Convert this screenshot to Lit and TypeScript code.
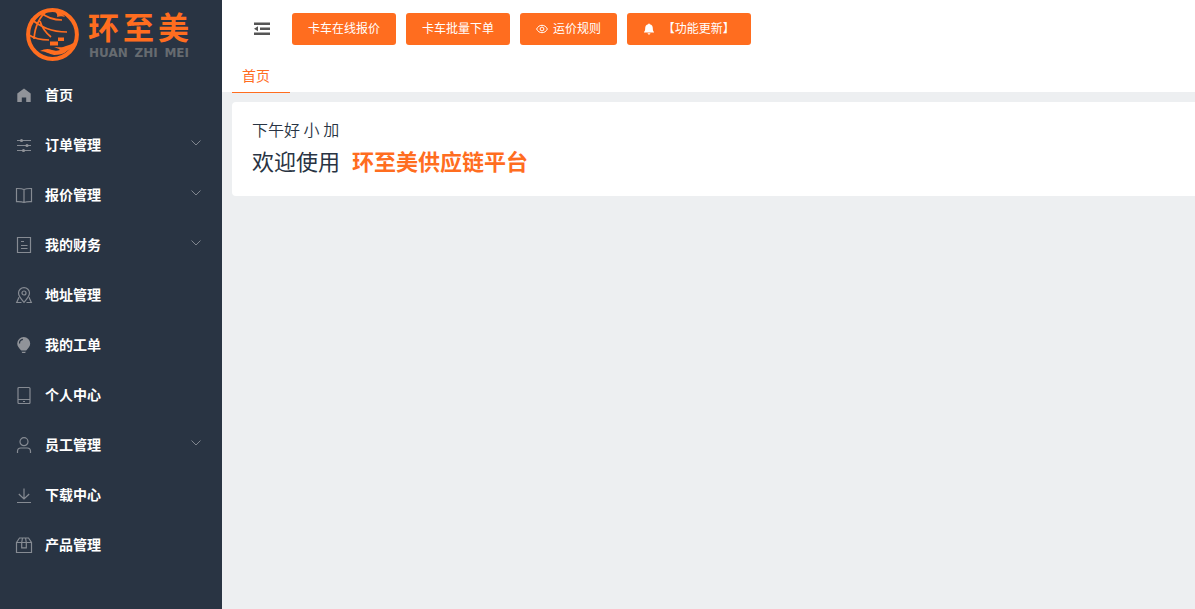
import { LitElement, html, css, svg, nothing } from "lit";
import { customElement, property, state } from "lit/decorators.js";
import { classMap } from "lit/directives/class-map.js";

const icons: Record<string, unknown> = {
  home: svg`<path class="solid" d="M9 2.4 2.3 7.6V16h4.5v-4.6h4.4V16h4.5V7.6z"/>`,
  operation: svg`<path d="M2 4.500h14M2 9.500h14M2 14.500h14"/><circle class="solid" cx="6.500" cy="4.500" r="1.600"/><circle class="solid" cx="12" cy="9.500" r="1.600"/><circle class="solid" cx="8.500" cy="14.500" r="1.600"/>`,
  book: svg`<path d="M9 3.500C6.500 2.300 4 2.500 1.500 2.500v13.200c2.500 0 5-.2 7.500.8 2.500-1 5-.8 7.500-.8V2.500c-2.500 0-5-.2-7.500 1zM9 3.500v13"/>`,
  document: svg`<path d="M2.500 1.500h13v15h-13zM6 5.500h3M6 9.500h6.500M6 12.500h6.500"/>`,
  location: svg`<path d="M9 16.300c-2.800-3-5.500-6-5.500-9.200a5.500 5.500 0 0 1 11 0c0 3.200-2.700 6.200-5.500 9.200z"/><circle cx="9" cy="7" r="2"/><path d="M4 11.300 1.700 16.500h4.800M14 11.300l2.300 5.200h-4.800"/>`,
  bulb: svg`<path class="solid" d="M8.700 1a6.500 6.500 0 0 0-6.500 6.500c0 2.900 2 4.500 3.300 6.300.3.500.5.800.9.800H11c.4 0 .6-.3.900-.8 1.300-1.800 3.300-3.400 3.300-6.300A6.500 6.500 0 0 0 8.700 1zM6.500 15.800h4.400l-.8 1.200H7.300z"/><path class="shade" d="M4.500 7.400c0-2.300 1.400-3.700 3.400-4"/>`,
  mobile: svg`<rect x="3" y="1.500" width="12" height="16" rx="1"/><path d="M3 13.500h12M8 15.500h2"/>`,
  user: svg`<circle cx="9" cy="5.700" r="4"/><path d="M2.500 17v-1.800c0-2 1.300-3.200 3.300-3.200h6.400c2 0 3.300 1.200 3.300 3.200V17"/>`,
  download: svg`<path d="M9 2.500v10.300M3.800 8 9 13l5.200-5M2 16.500h14"/>`,
  box: svg`<path d="M1.500 6.500 4.500 2h9l3 4.500v10h-15zM1.500 6.500h15M7.500 2 6.700 6.500v5.300h4.600V6.500L10.500 2"/>`,
};

interface MenuEntry {
  icon: string;
  label: string;
  group?: boolean;
}

const menu: MenuEntry[] = [
  { icon: "home", label: "首页" },
  { icon: "operation", label: "订单管理", group: true },
  { icon: "book", label: "报价管理", group: true },
  { icon: "document", label: "我的财务", group: true },
  { icon: "location", label: "地址管理" },
  { icon: "bulb", label: "我的工单" },
  { icon: "mobile", label: "个人中心" },
  { icon: "user", label: "员工管理", group: true },
  { icon: "download", label: "下载中心" },
  { icon: "box", label: "产品管理" },
];

@customElement("brand-logo")
class BrandLogo extends LitElement {
  static styles = css`
    :host {
      display: flex;
      align-items: center;
      gap: 8px;
      padding: 5px 32px 0 25px;
      height: 64px;
      box-sizing: border-box;
    }
    .mark {
      width: 55px;
      height: 55px;
      flex: none;
    }
    .words {
      display: flex;
      flex-direction: column;
      gap: 2px;
      width: 101px;
      padding-top: 2px;
    }
    .name {
      display: flex;
      justify-content: space-between;
      color: #ff6d1f;
      font-family: "Liberation Sans", "Noto Sans CJK SC", sans-serif;
      font-size: 31px;
      line-height: 32px;
      font-weight: 700;
    }
    .latin {
      display: flex;
      justify-content: space-between;
      padding-left: 1px;
      color: #666b70;
      font: 700 12px/12px "DejaVu Sans", sans-serif;
    }
  `;

  render() {
    return html`
      <svg class="mark" viewBox="0 0 55 55" fill="none" stroke="#ff6d1f" aria-hidden="true">
        <circle cx="27.500" cy="27.500" r="24.400" stroke-width="4" />
        <path stroke-width="1.700" d="M23 3C15 9 10 18 9 32M6 12c10 8 20 13 36 13M15 5c7 6 14 8 22 8M4 28c6 4 12 5 20 5M15 14c2 7 6 12 11 16" />
        <path fill="#ff6d1f" stroke="none" d="M27 3c7 1 10 3 13 7-3-1-5-1-8 0 1-3-1-5-5-7zM25 34.500h8v4h-8zM33 30.500h6v3.500h-6z" />
        <path fill="#ff6d1f" stroke="none" d="M15 44c4-2 8-3 12-1 4 1 5 1 8 0-2-2-4-2-6-3 5 0 8 1 12-1 3-1 6-2 9-4-1 4-4 7-8 9-3 3-8 4-13 4-5-1-9-4-14-4z" />
      </svg>
      <div class="words">
        <div class="name"><span>环</span><span>至</span><span>美</span></div>
        <div class="latin"><span>HUAN</span><span>ZHI</span><span>MEI</span></div>
      </div>
    `;
  }
}

@customElement("side-menu")
class SideMenu extends LitElement {
  @state() private open = new Set<string>();

  static styles = css`
    .list {
      list-style: none;
      margin: 0;
      padding: 6px 0;
    }
    .entry {
      display: flex;
      align-items: center;
      width: 100%;
      height: 50px;
      box-sizing: border-box;
      padding: 0 20px 0 15px;
      border: 0;
      background: none;
      color: #fff;
      font: inherit;
      font-size: 14px;
      font-weight: 700;
      text-align: left;
      text-decoration: none;
      cursor: pointer;
    }
    .entry:hover {
      background: #212a36;
    }
    .icon {
      width: 18px;
      height: 18px;
      flex: none;
      margin-right: 12px;
      fill: none;
      stroke: #868b93;
      stroke-width: 1.2;
    }
    .solid {
      fill: #909399;
      stroke: none;
    }
    .shade {
      stroke: #293443;
    }
    .label {
      flex: 1;
      padding-bottom: 2px;
    }
    .arrow {
      width: 12px;
      height: 12px;
      padding-bottom: 4px;
      fill: none;
      stroke: #7f858e;
    }
    .flipped {
      transform: rotate(180deg);
    }
  `;

  private toggle(label: string) {
    const next = new Set(this.open);
    next.has(label) ? next.delete(label) : next.add(label);
    this.open = next;
  }

  render() {
    return html`<ul class="list">
      ${menu.map((m) => {
        const body = html`<svg class="icon" viewBox="0 0 18 18" aria-hidden="true">${icons[m.icon]}</svg>
          <span class="label">${m.label}</span>
          ${m.group
            ? html`<svg class=${classMap({ arrow: true, flipped: this.open.has(m.label) })} viewBox="0 0 12 12" aria-hidden="true"><path d="M1.500 3.500 6 8l4.500-4.500" /></svg>`
            : nothing}`;
        return html`<li>
          ${m.group
            ? html`<button class="entry" type="button" aria-expanded=${this.open.has(m.label)} @click=${() => this.toggle(m.label)}>${body}</button>`
            : html`<a class="entry" href="#">${body}</a>`}
        </li>`;
      })}
    </ul>`;
  }
}

@customElement("app-root")
class AppRoot extends LitElement {
  @property() greeting = "下午好 小 加";

  static styles = css`
    :host {
      display: flex;
      min-height: 100vh;
      background: #edeff1;
      color: #293443;
      font-family: "Noto Sans CJK SC", sans-serif;
    }
    .side {
      flex: none;
      width: 222px;
      background: #293443;
    }
    .page {
      flex: 1;
      min-width: 0;
    }
    .header {
      background: #fff;
    }
    .toolbar {
      display: flex;
      align-items: center;
      gap: 10px;
      padding: 13px 30px 0;
    }
    .fold {
      display: flex;
      padding: 0;
      margin-right: 10px;
      border: 0;
      background: none;
      cursor: pointer;
    }
    .action {
      display: flex;
      align-items: center;
      gap: 5px;
      height: 32px;
      padding: 0 16px;
      border: 0;
      border-radius: 3px;
      background: #ff6d1f;
      color: #fff;
      font: inherit;
      font-size: 12px;
      line-height: 12px;
      white-space: pre;
      cursor: pointer;
    }
    .caption {
      padding-bottom: 2px;
    }
    .glyph {
      width: 12px;
      height: 12px;
    }
    .tabs {
      display: flex;
      height: 47px;
      padding: 0 10px;
    }
    .tab {
      display: flex;
      align-items: center;
      height: 48px;
      width: 58px;
      box-sizing: border-box;
      padding: 12px 10px 0;
      border-bottom: 1px solid #ff6d1f;
      color: #ff6d1f;
      font-size: 14px;
      line-height: 20px;
      text-decoration: none;
    }
    .card {
      margin: 10px 0 0 10px;
      padding: 14px 20px 18px;
      border-radius: 4px 0 0 4px;
      background: #fff;
    }
    .greeting {
      margin: 0;
      font-size: 16px;
      line-height: 26px;
      font-weight: 350;
    }
    .welcome {
      display: flex;
      flex-wrap: wrap;
      gap: 12px;
      margin: 0;
      font-size: 22px;
      line-height: 36px;
      font-weight: 400;
    }
    .platform {
      color: #ff6d1f;
      font-weight: 700;
    }
  `;

  render() {
    return html`
      <aside class="side">
        <brand-logo></brand-logo>
        <nav aria-label="菜单"><side-menu></side-menu></nav>
      </aside>
      <div class="page">
        <header class="header">
          <div class="toolbar">
            <button class="fold" type="button" aria-label="折叠">
              <svg width="20" height="20" viewBox="0 0 20 20" aria-hidden="true">
                <path fill="#555" d="M2 3.500h16v2.500H2zM8 8.500h10v2.500H8zM2 13.500h16v2.500H2zM2 9.750l4-2.500v5z" />
              </svg>
            </button>
            <button class="action" type="button"><span class="caption">卡车在线报价</span></button>
            <button class="action" type="button"><span class="caption">卡车批量下单</span></button>
            <button class="action" type="button"><svg class="glyph" viewBox="0 0 12 12" fill="none" stroke="#fff" aria-hidden="true"><path d="M.6 6C1.800 3.600 3.700 2.300 6 2.300S10.200 3.600 11.400 6C10.200 8.400 8.300 9.700 6 9.700S1.800 8.400.6 6z"/><circle cx="6" cy="6" r="1.900"/></svg><span class="caption">运价规则</span></button>
            <button class="action" type="button"><svg class="glyph" viewBox="0 0 12 12" fill="#fff" aria-hidden="true"><path d="M6 .4c.5 0 .8.300.8.800 1.900.4 3 1.900 3 3.800 0 2 .3 3 1.200 4v.6H1V9c.9-1 1.200-2 1.200-4 0-1.900 1.100-3.400 3-3.800 0-.5.300-.8.800-.8zM4.600 10.200h2.800c-.1.900-.7 1.400-1.400 1.400s-1.300-.5-1.400-1.400z"/></svg><span class="caption"> 【功能更新】</span></button>
          </div>
          <nav class="tabs"><a class="tab" href="#" aria-current="page">首页</a></nav>
        </header>
        <main>
          <section class="card">
            <p class="greeting">${this.greeting}</p>
            <h1 class="welcome"><span>欢迎使用</span><span class="platform">环至美供应链平台</span></h1>
          </section>
        </main>
      </div>
    `;
  }
}
